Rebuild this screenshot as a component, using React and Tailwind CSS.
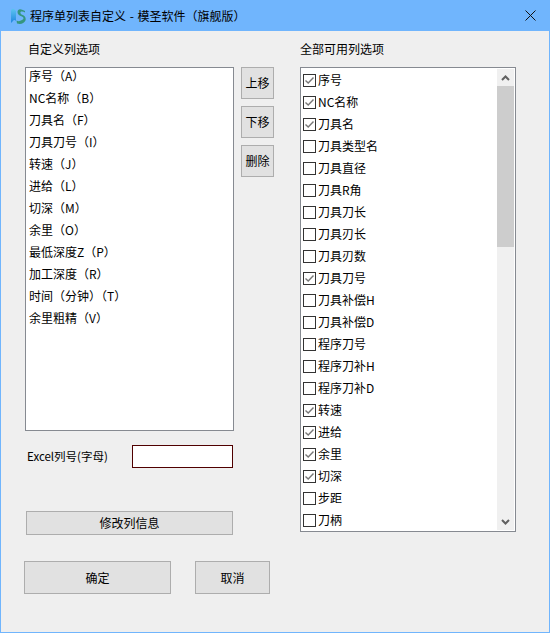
const leftItems = [
  "序号（A）",
  "NC名称（B）",
  "刀具名（F）",
  "刀具刀号（I）",
  "转速（J）",
  "进给（L）",
  "切深（M）",
  "余里（O）",
  "最低深度Z（P）",
  "加工深度（R）",
  "时间（分钟）（T）",
  "余里粗精（V）",
];

const rightItems = [
  ["序号", true],
  ["NC名称", true],
  ["刀具名", true],
  ["刀具类型名", false],
  ["刀具直径", false],
  ["刀具R角", false],
  ["刀具刀长", false],
  ["刀具刃长", false],
  ["刀具刃数", false],
  ["刀具刀号", true],
  ["刀具补偿H", false],
  ["刀具补偿D", false],
  ["程序刀号", false],
  ["程序刀补H", false],
  ["程序刀补D", false],
  ["转速", true],
  ["进给", true],
  ["余里", true],
  ["切深", true],
  ["步距", false],
  ["刀柄", false],
];

const Logo = () => (
  <svg width="16" height="18" viewBox="0 0 16 18" className="shrink-0">
    <defs>
      <linearGradient id="logoBar" x1="0" y1="0" x2="0" y2="1">
        <stop offset="0" stopColor="#5cc4f0" />
        <stop offset="1" stopColor="#1f86e0" />
      </linearGradient>
    </defs>
    <path d="M1 16 V5 Q1 1 4 2 L6 4 V14 Q4 12 3 14 Z" fill="url(#logoBar)" />
    <path d="M15 4 Q8 0 7.5 5 Q7.5 8 12 9.500 Q15 11 12 13 Q9 15 6.500 13.500 L7 16.500 Q13 18 15.500 13.500 Q16.500 9 11.500 7.500 Q9.500 6 11 4.500 Q13 4 15 5.500 Z" fill="#35967f" />
  </svg>
);

const Check = ({ checked }) => (
  <span className="w-[13px] h-[13px] border border-[#333333] bg-white shrink-0 flex items-center justify-center">
    {checked && (
      <svg width="11" height="11" viewBox="0 0 11 11">
        <path d="M1.500 5.500 L4.200 8 L9.500 2.500" fill="none" stroke="#777777" strokeWidth="1.400" />
      </svg>
    )}
  </span>
);

const SideButton = ({ children }) => (
  <button className="w-[33px] h-[32px] bg-[#e1e1e1] border border-[#adadad] text-[12px] text-black">
    {children}
  </button>
);

export default function App() {
  return (
    <div
      className="w-[550px] h-[633px] bg-[#efefef] border border-t-0 border-[#70b5fd] flex flex-col text-black text-[12px] overflow-hidden"
      style={{ fontFamily: '"Noto Sans CJK SC", "Liberation Sans", sans-serif' }}
    >
      <div className="h-[31px] bg-[#70b5fd] flex items-center shrink-0 pl-[9px] pr-[13px]">
        <Logo />
        <span className="ml-[4px] text-[12px] [word-spacing:1px]">程序单列表自定义 - 模圣软件（旗舰版）</span>
        <svg width="11" height="11" viewBox="0 0 11 11" className="ml-auto">
          <path d="M0.500 0.500 L10.500 10.500 M10.500 0.500 L0.500 10.500" stroke="#111111" strokeWidth="1" />
        </svg>
      </div>

      <div className="flex pl-[24px] pt-[9px]">
        <div className="w-[209px] shrink-0 flex flex-col">
          <div className="h-[18px] pl-[3px] leading-[18px]">自定义列选项</div>
          <div className="mt-[9px] h-[364px] bg-white border border-[#868a91] pl-[3px]">
            {leftItems.map((t) => (
              <div key={t} className="h-[22px] leading-[16px]">
                {t}
              </div>
            ))}
          </div>
          <div className="mt-[14px] flex items-center">
            <span className="w-[107px] pl-[2px] text-[11.500px]">Excel列号(字母)</span>
            <div className="w-[101px] h-[23px] bg-white border border-[#500000]" />
          </div>
          <button className="mt-[43px] ml-[1px] w-[207px] h-[24px] bg-[#e1e1e1] border border-[#adadad] text-[12px]">
            修改列信息
          </button>
          <div className="mt-[26px] -ml-[1px] flex w-[246px]">
            <button className="w-[147px] h-[33px] shrink-0 bg-[#e1e1e1] border border-[#adadad] text-[12px]">确定</button>
            <button className="ml-[24px] w-[75px] h-[33px] shrink-0 bg-[#e1e1e1] border border-[#adadad] text-[12px]">取消</button>
          </div>
        </div>

        <div className="ml-[7px] mt-[27px] flex flex-col gap-[7px]">
          <SideButton>上移</SideButton>
          <SideButton>下移</SideButton>
          <SideButton>删除</SideButton>
        </div>

        <div className="ml-[26px] w-[216px] flex flex-col">
          <div className="h-[18px] leading-[18px]">全部可用列选项</div>
          <div className="mt-[9px] h-[465px] bg-white border border-[#868a91] flex">
            <div className="flex-1 pl-[2px] pt-[1px]">
              {rightItems.map(([t, c]) => (
                <div key={t} className="h-[22px] flex items-center gap-[2px]">
                  <Check checked={c} />
                  <span>{t}</span>
                </div>
              ))}
            </div>
            <div className="w-[17px] mt-[1px] mb-[1px] mr-[1px] bg-[#f0f0f0] flex flex-col items-center">
              <div className="h-[17px] flex items-center">
                <svg width="9" height="6" viewBox="0 0 9 6">
                  <path d="M1 5 L4.500 1.500 L8 5" fill="none" stroke="#606060" strokeWidth="2" />
                </svg>
              </div>
              <div className="w-full h-[161px] bg-[#cdcdcd]" />
              <div className="mt-auto h-[17px] flex items-center">
                <svg width="9" height="6" viewBox="0 0 9 6">
                  <path d="M1 1 L4.500 4.500 L8 1" fill="none" stroke="#606060" strokeWidth="2" />
                </svg>
              </div>
            </div>
          </div>
        </div>
      </div>
    </div>
  );
}
